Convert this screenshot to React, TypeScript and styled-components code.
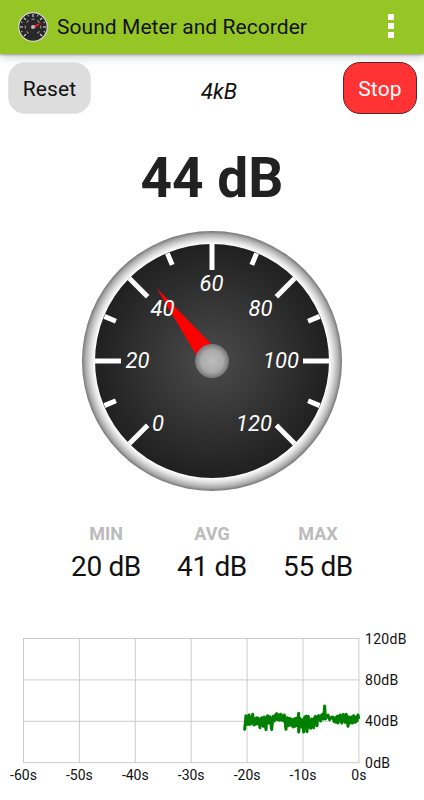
import React from "react";
import styled, { createGlobalStyle } from "styled-components";

const GlobalStyle = createGlobalStyle`
  * { box-sizing: border-box; }
  body { margin: 0; background: #fff; font-family: Roboto, sans-serif; color: #111; }
`;

const Screen = styled.div`
  width: 424px;
  height: 800px;
  display: flex;
  flex-direction: column;
  overflow: hidden;
  background: #fff;
`;

const AppBar = styled.header`
  flex: none;
  height: 54px;
  padding: 0 30px 0 18px;
  display: flex;
  align-items: center;
  background: #95c626;
  box-shadow: 0 1px 2px rgba(0, 0, 0, 0.3), 0 3px 9px rgba(0, 0, 0, 0.2);
`;

const LogoIcon = styled.svg`
  width: 30px;
  height: 32px;
  flex: none;
`;

const Title = styled.h1`
  margin: 0 auto 0 9px;
  font-size: 21px;
  font-weight: 400;
  letter-spacing: 0.06px;
  line-height: 54px;
  white-space: nowrap;
`;

const MenuButton = styled.div`
  display: grid;
  gap: 3px;
  padding-bottom: 2px;
`;

const MenuDot = styled.i`
  width: 6px;
  height: 6px;
  background: #fff;
`;

const Controls = styled.div`
  flex: none;
  height: 60px;
  display: flex;
  justify-content: space-between;
  align-items: flex-start;
  padding: 8px 7px 0 8px;
`;

const Button = styled.button<{ $danger?: boolean }>`
  width: ${(p) => (p.$danger ? 74 : 83)}px;
  height: 52px;
  padding: 2px 0 0;
  border: 1px solid ${(p) => (p.$danger ? "#632424" : "#e4e4e4")};
  border-radius: 17px;
  background: ${(p) => (p.$danger ? "#ff3333" : "#dddddd")};
  color: ${(p) => (p.$danger ? "#fff" : "#111")};
  font: 400 21px/48px Roboto, sans-serif;
  letter-spacing: 0.15px;
`;

const FileSize = styled.span`
  padding: 17px 0 0 4px;
  font-size: 22px;
  line-height: 26px;
  font-style: italic;
`;

const Reading = styled.div`
  flex: none;
  height: 117px;
  padding-top: 32px;
  text-align: center;
  font-size: 55px;
  font-weight: 700;
  line-height: 64px;
  color: #212121;
`;

const Gauge = styled.svg`
  flex: none;
  align-self: center;
  width: 260px;
  height: 260px;
  font: italic 400 22px Roboto, sans-serif;
`;

const Stats = styled.div`
  flex: none;
  height: 138px;
  display: grid;
  grid-template-columns: repeat(3, 106px);
  justify-content: center;
  padding-top: 33px;
  text-align: center;
`;

const StatLabel = styled.div`
  font-size: 18px;
  font-weight: 700;
  line-height: 20px;
  color: #bbb;
`;

const StatValue = styled.div`
  margin-top: 6px;
  font-size: 28px;
  letter-spacing: -0.35px;
  line-height: 34px;
`;

const Chart = styled.svg`
  flex: none;
  width: 424px;
  height: 171px;
  font: 400 14px Roboto, sans-serif;
  fill: #111;
`;

const ScaleLabel = styled.text`
  letter-spacing: 0.3px;
`;

const MAJORS = [0, 20, 40, 60, 80, 100, 120];
const MINORS = [10, 30, 50, 70, 90, 110];
const LABELS: [number, number, number][] = [
  [0, 76, 200],
  [20, 55.5, 137],
  [40, 80.5, 85],
  [60, 129.5, 60],
  [80, 178.5, 85],
  [100, 199, 137],
  [120, 172, 200],
];
const dialAngle = (db: number) => ((db - 60) / 120) * 270;

function Dial() {
  return (
    <Gauge viewBox="0 0 260 260">
      <defs>
        <radialGradient id="rim">
          <stop offset="0.9" stopColor="#ffffff" />
          <stop offset="0.935" stopColor="#dedede" />
          <stop offset="0.975" stopColor="#aaaaaa" />
          <stop offset="1" stopColor="#747474" />
        </radialGradient>
        <radialGradient id="face">
          <stop offset="0" stopColor="#4b4b4b" />
          <stop offset="1" stopColor="#202020" />
        </radialGradient>
        <radialGradient id="hub">
          <stop offset="0" stopColor="#bdbdbd" />
          <stop offset="0.65" stopColor="#aaaaaa" />
          <stop offset="1" stopColor="#777777" />
        </radialGradient>
      </defs>
      <circle cx="130" cy="130" r="130" fill="url(#rim)" />
      <circle cx="130" cy="130" r="117" fill="url(#face)" />
      {MAJORS.map((v) => (
        <path key={v} d="M130 13V39" stroke="#fff" strokeWidth="5" transform={`rotate(${dialAngle(v)} 130 130)`} />
      ))}
      {MINORS.map((v) => (
        <path key={v} d="M130 13.5V26" stroke="#fff" strokeWidth="5" transform={`rotate(${dialAngle(v)} 130 130)`} />
      ))}
      <path d="M74.5 57L139 123L122 137Z" fill="#f00" />
      <circle cx="130" cy="130" r="17" fill="url(#hub)" />
      {LABELS.map(([v, x, y]) => (
        <text key={v} x={x} y={y} fill="#fff" textAnchor="middle">{v}</text>
      ))}
    </Gauge>
  );
}

const SAMPLES: [number, number][] = [
  [29, 103], [33, 62], [34, 88], [38, 66], [40, 88], [42, 60], [46, 88], [49, 66], [51, 84], [53, 58],
  [57, 90], [60, 72], [62, 88], [65, 68], [67, 86], [70, 70], [75, 98], [78, 74], [80, 68], [85, 94],
  [88, 66], [93, 104], [95, 72], [98, 62], [101, 84], [105, 65], [110, 104], [113, 72], [115, 64], [118, 78],
  [120, 62], [125, 56], [127, 74], [130, 60], [134, 76], [137, 58], [142, 76], [144, 62], [147, 78], [148, 60],
  [153, 103], [156, 68], [160, 92], [163, 70], [166, 90], [168, 72], [174, 96], [177, 72], [180, 94], [183, 70],
  [187, 92], [191, 55], [191, 111], [195, 70], [198, 96], [202, 74], [206, 111], [209, 66], [212, 96], [214, 64],
  [216, 110], [220, 64], [223, 96], [226, 76], [227, 100], [230, 72], [236, 98], [238, 70], [241, 64], [246, 92],
  [248, 66], [251, 62], [257, 78], [259, 62], [262, 58], [266, 72], [269, 33], [271, 72], [275, 64], [279, 60],
  [284, 74], [288, 68], [293, 66], [298, 80], [301, 68], [304, 82], [307, 64], [309, 84], [315, 60], [320, 84],
  [322, 62], [325, 58], [330, 82], [332, 64], [334, 58], [339, 94], [342, 66], [346, 84], [350, 66], [353, 84],
  [356, 62], [361, 82], [364, 66], [366, 78], [369, 60], [371, 68],
];
const trace = SAMPLES.map(([x, y]) => `${235 + x / 3},${66 + y / 3}`).join(" ");

function History() {
  return (
    <Chart viewBox="0 0 424 171">
      {[0, 1, 2, 3, 4, 5, 6].map((i) => (
        <g key={i}>
          <path d={`M${23.5 + i * 55.9} 9V134`} stroke="#ccc" />
          <text x={23.5 + i * 55.9} y="151" textAnchor="middle">{i === 6 ? "0s" : `${i * 10 - 60}s`}</text>
        </g>
      ))}
      {[120, 80, 40, 0].map((v, i) => (
        <g key={v}>
          <path d={`M23 ${9.5 + i * 41.4}H359.5`} stroke="#ccc" />
          <ScaleLabel x="365" y={14.5 + i * 41.4}>{v}dB</ScaleLabel>
        </g>
      ))}
      <polyline points={trace} fill="none" stroke="#008000" strokeWidth="3" strokeLinejoin="round" strokeLinecap="round" />
    </Chart>
  );
}

function Logo() {
  return (
    <LogoIcon viewBox="0 0 30 32">
      <circle cx="15" cy="16" r="14.3" fill="#282828" stroke="#d5d5cf" strokeWidth="1.3" />
      {MAJORS.map((v) => (
        <path key={v} d="M15 3V6" stroke="#eee" transform={`rotate(${dialAngle(v)} 15 16)`} />
      ))}
      {MINORS.map((v) => (
        <path key={v} d="M15 3V4.5" stroke="#ccc" transform={`rotate(${dialAngle(v)} 15 16)`} />
      ))}
      {MAJORS.map((v) => (
        <path key={v} d="M13.5 8.3H16.5" stroke="#888" strokeWidth="1.3" transform={`rotate(${dialAngle(v)} 15 16)`} />
      ))}
      <path d="M15.5 14.5L24 11.5L17 17.2Z" fill="#e02020" />
      <circle cx="15" cy="16" r="2" fill="#bbb" />
    </LogoIcon>
  );
}

export default function App() {
  return (
    <Screen>
      <GlobalStyle />
      <AppBar>
        <Logo />
        <Title>Sound Meter and Recorder</Title>
        <MenuButton>
          <MenuDot />
          <MenuDot />
          <MenuDot />
        </MenuButton>
      </AppBar>
      <Controls>
        <Button>Reset</Button>
        <FileSize>4kB</FileSize>
        <Button $danger>Stop</Button>
      </Controls>
      <Reading>44 dB</Reading>
      <Dial />
      <Stats>
        {[["MIN", "20 dB"], ["AVG", "41 dB"], ["MAX", "55 dB"]].map(([label, value]) => (
          <div key={label}>
            <StatLabel>{label}</StatLabel>
            <StatValue>{value}</StatValue>
          </div>
        ))}
      </Stats>
      <History />
    </Screen>
  );
}
